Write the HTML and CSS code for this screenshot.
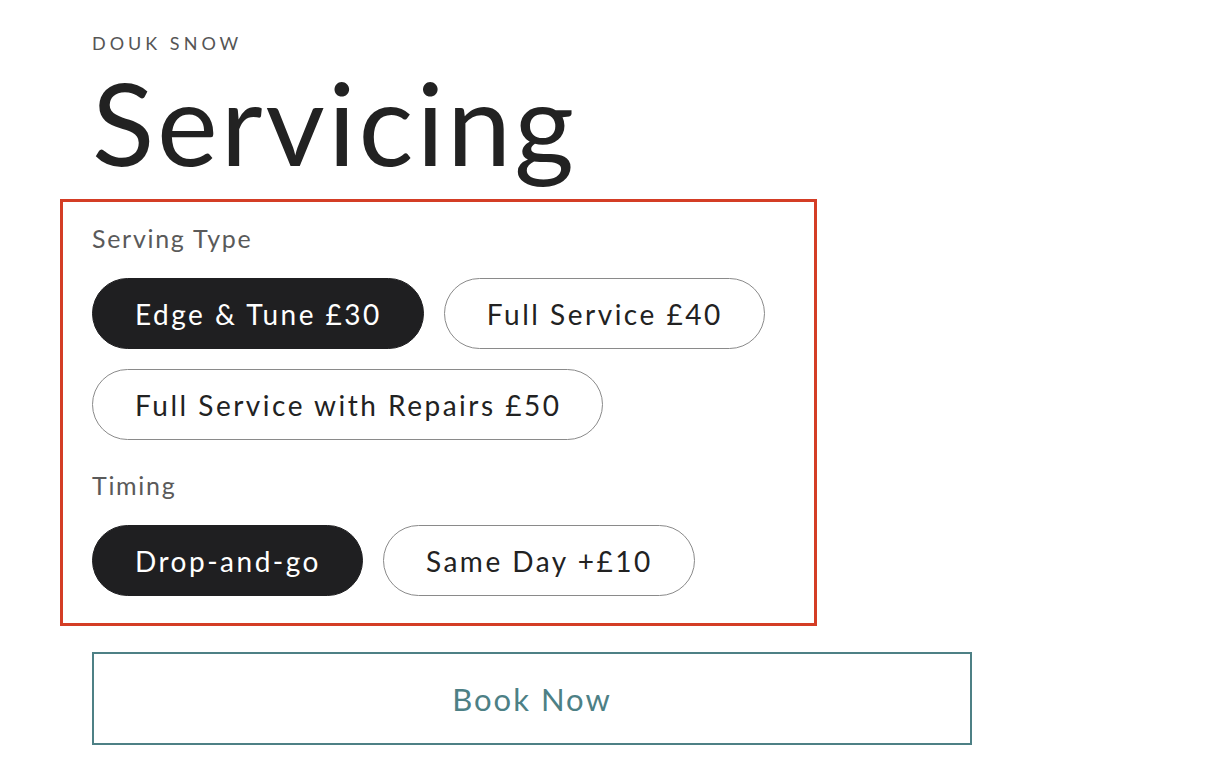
FILE: index.html
```html
<!DOCTYPE html>
<html lang="en">
<head>
    <meta charset="UTF-8">
    <meta name="viewport" content="width=device-width, initial-scale=1.0">
    <title>Servicing - Douk Snow</title>
    <link rel="stylesheet" href="styles.css">
</head>
<body>
    <main class="page">
        <p class="brand">DOUK SNOW</p>
        <h1>Servicing</h1>

        <div class="options">
            <div class="group">
                <label class="group-label">Serving Type</label>
                <div class="pills">
                    <button class="pill selected">Edge &amp; Tune £30</button>
                    <button class="pill">Full Service £40</button>
                    <button class="pill">Full Service with Repairs £50</button>
                </div>
            </div>

            <div class="group">
                <label class="group-label">Timing</label>
                <div class="pills">
                    <button class="pill selected">Drop-and-go</button>
                    <button class="pill">Same Day +£10</button>
                </div>
            </div>
        </div>

        <button class="book">Book Now</button>
    </main>
</body>
</html>
```

FILE: styles.css
```css
body {
    margin: 0;
    background: #fff;
    font-family: Lato, "Open Sans", sans-serif;
    color: #222;
}

.page {
    width: 880px;
    padding: 30px 0 0 92px;
}

.brand {
    margin: 0;
    font-size: 18px;
    letter-spacing: 4px;
    color: #555;
    line-height: 26px;
}

h1 {
    margin: -13px 0 0;
    font-size: 115px;
    font-weight: 400;
    line-height: 156px;
    letter-spacing: 3px;
    color: #222;
}

.options {
    margin: 0 0 0 -32px;
    width: 757px;
    box-sizing: border-box;
    border: 3px solid #d43d25;
    padding: 20px 30px 27px 29px;
}

.group + .group {
    margin-top: 29px;
}

.group-label {
    display: block;
    font-size: 25px;
    line-height: 32px;
    letter-spacing: 1.7px;
    color: #5a5a5a;
    margin-bottom: 24px;
}

.pills {
    display: flex;
    flex-wrap: wrap;
    gap: 20px;
}

.pill {
    font-family: inherit;
    font-size: 28px;
    line-height: 32px;
    letter-spacing: 2.5px;
    color: #222;
    background: #fff;
    border: 1.5px solid #8a8a8a;
    border-radius: 40px;
    padding: 18.5px 41px 18.5px 42px;
    cursor: pointer;
}

.pill.selected {
    background: #1f1f21;
    border-color: #1f1f21;
    color: #fff;
}

.book {
    display: block;
    width: 880px;
    height: 93px;
    margin-top: 26px;
    background: #fff;
    border: 2px solid #4d8085;
    color: #4d8085;
    font-family: inherit;
    font-size: 31px;
    letter-spacing: 2px;
    cursor: pointer;
}
```
